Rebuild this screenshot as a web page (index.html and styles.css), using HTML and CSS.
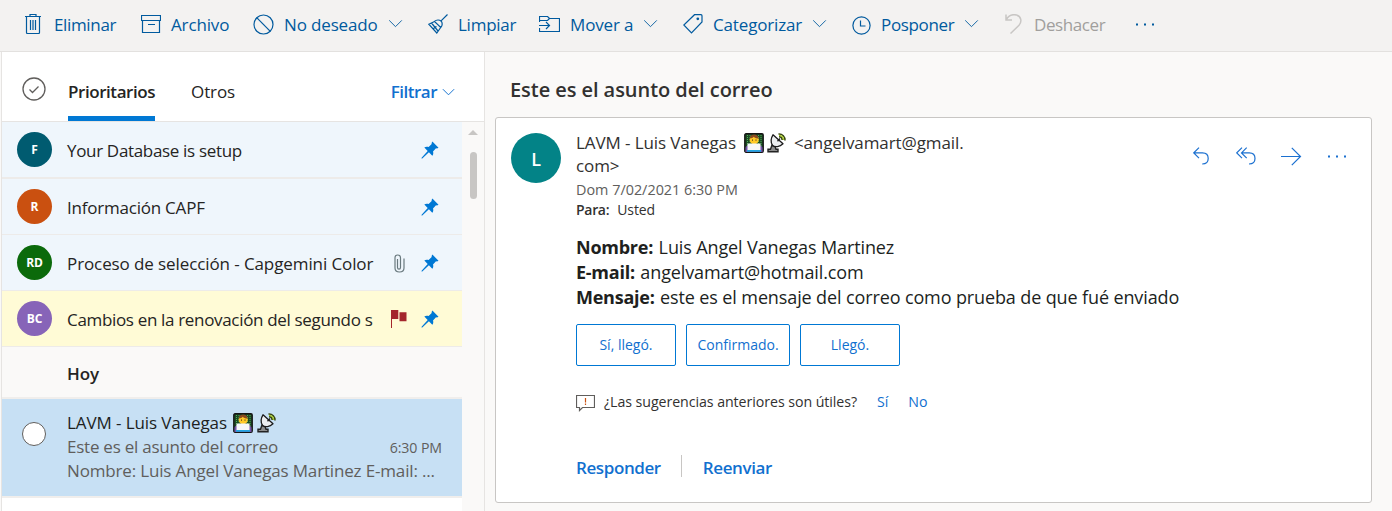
FILE: index.html
```html
<!DOCTYPE html>
<html lang="es">
<head>
<meta charset="utf-8">
<title>Correo</title>
<link rel="stylesheet" href="styles.css">
</head>
<body>
<svg class="defs" width="0" height="0" aria-hidden="true">
  <symbol id="chevron" viewBox="0 0 16 10"><path d="M1 1.5l7 7 7-7"/></symbol>
  <symbol id="pin" viewBox="0 0 18 18"><path class="solid" d="M11.4 .6l6.1 6.1-1.5.7-1-.1-3 3.1c.6 1.7.3 3.200-.7 4.300L7.900 11.300 1.300 17.500.5 17.600l.1-.9L6.700 10 3.300 6.600c1.200-1 2.700-1.200 4.300-.6l3.100-3-.1-1z"/></symbol>
  <symbol id="coder" viewBox="0 0 20 20">
    <rect x=".8" y=".8" width="18.400" height="18.400" rx="1.200" fill="#1d4a24" stroke="#151515" stroke-width="1.400"/>
    <path d="M3.500 2v15M6 2v15M14.500 2v15M17 2v15" stroke="#4fae57" stroke-width="1" stroke-dasharray="1 1"/>
    <path d="M1.500 19v-4c0-2 2-2.500 4-2.500h9c2 0 4 .5 4 2.500v4z" fill="#7451a8"/>
    <circle cx="10.200" cy="6.800" r="4.600" fill="#ffc928"/>
    <path d="M5.800 5.500c0-5 8.300-5.500 8.900 0-2.500 0-4-.8-5-1.800-.8 1-2 1.700-3.900 1.800z" fill="#8c4b20"/>
    <path d="M8.500 6.500v1.200M12 6.500v1.200" stroke="#4b3220" stroke-width="1"/>
    <path d="M3.500 10.500h13v6.500h-13z" fill="#f7f7fa"/><path d="M3 17h14v1.800H3z" fill="#22a4df"/>
  </symbol>
  <symbol id="dish" viewBox="0 0 20 20">
    <path d="M1 18.800V16.200h2.500l1.500-4.200 3 1.500 1 2.700h2v2.600z" fill="#8d8d8d" stroke="#222" stroke-width="1.400"/>
    <path d="M6 1.800L16 10.800C13 13.500 8 15 5.500 12.200 3.500 9.200 4 5 6 1.800z" fill="#eceef0" stroke="#1c1c1c" stroke-width="1.300" stroke-linejoin="round"/>
    <path d="M10.500 8.200l2.500-2.700" stroke="#1c1c1c" stroke-width="1.300"/>
    <path d="M12 3.800c2 0 3.200 1.200 3.200 3.200M11.500 1c4-.2 6.700 2.500 6.500 6.500" fill="none" stroke="#36450f" stroke-width="1.500"/>
    <path d="M12 2.400c2.900.2 4.500 1.800 4.600 4.600" fill="none" stroke="#a3c71d" stroke-width="1.100"/>
  </symbol>
</svg>

<header class="toolbar">
  <div class="tool tool-delete">
    <svg class="icon" width="16" height="20" viewBox="0 0 16 20"><path d="M0 2.500h16M5 2.500v-2h6v2M1.500 2.500v16q0 1 1 1h11q1 0 1-1v-16M5.500 6v10M8 6v10M10.500 6v10"/></svg>
    <span>Eliminar</span>
  </div>
  <div class="tool tool-archive">
    <svg class="icon" width="20" height="18" viewBox="0 0 20 18"><path d="M.5.500h19v5H.5zM1.500 5.500v12h17v-12M7 9.500h7"/></svg>
    <span>Archivo</span>
  </div>
  <div class="tool tool-junk">
    <svg class="icon" width="21" height="21" viewBox="0 0 21 21"><circle cx="10.500" cy="10.500" r="9.500"/><path d="M3.700 3.700l13.600 13.600"/></svg>
    <span>No deseado</span><svg class="icon chev" width="15" height="9"><use href="#chevron"/></svg>
  </div>
  <div class="tool tool-sweep">
    <svg class="icon" width="20" height="20" viewBox="0 0 20 20"><path d="M19.500.500l-6.200 6.200M6.500 7.500c2-2 5-1.800 6.500-.5s1.800 4.500-.3 6.500zM6.500 7.500L.8 10.200 8.800 19l3.900-5.500M3.500 9l6.500 8M5.500 14.500l3-2"/></svg>
    <span>Limpiar</span>
  </div>
  <div class="tool tool-move">
    <svg class="icon" width="21" height="16" viewBox="0 0 21 16"><path d="M.5 6V.5h8l2 2h10v13H.5V12M.5 4.500h8l2-2M0 9.500h10M7 6l3.500 3.500L7 13"/></svg>
    <span>Mover a</span><svg class="icon chev" width="15" height="9"><use href="#chevron"/></svg>
  </div>
  <div class="tool tool-tag">
    <svg class="icon" width="20" height="20" viewBox="0 0 20 20"><path d="M11.500.700h6.500q1 0 1 1V8L8.500 18.800.8 11z"/><circle class="dot" cx="14.800" cy="4.800" r="1.400"/></svg>
    <span>Categorizar</span><svg class="icon chev" width="15" height="9"><use href="#chevron"/></svg>
  </div>
  <div class="tool tool-snooze">
    <svg class="icon" width="19" height="19" viewBox="0 0 19 19"><circle cx="9.500" cy="9.500" r="8.600"/><path d="M8.500 4.500v5.500h5"/></svg>
    <span>Posponer</span><svg class="icon chev" width="15" height="9"><use href="#chevron"/></svg>
  </div>
  <div class="tool tool-undo">
    <svg class="icon" width="17" height="20" viewBox="0 0 17 20"><path d="M1 .500v5.500h6M1.300 5.500C4 1 8 .2 11.500 1c5 1.500 5.500 7 2.500 10.300L5.500 19.500"/></svg>
    <span>Deshacer</span>
  </div>
  <div class="tool tool-more">
    <svg class="icon" width="19" height="3" viewBox="0 0 19 3"><path class="solid" d="M0 .500h2v2H0zM8 .500h2v2H8zM16 .500h2v2h-2z"/></svg>
  </div>
</header>

<main class="workspace">
  <section class="list">
    <nav class="tabs">
      <svg class="select-all" width="24" height="24" viewBox="0 0 24 24"><circle cx="12" cy="12" r="11"/><path d="M7.500 12.500l3 3 6-6"/></svg>
      <span class="tab tab-active">Prioritarios</span>
      <span class="tab">Otros</span>
      <span class="filter">Filtrar <svg class="icon" width="13" height="8"><use href="#chevron"/></svg></span>
    </nav>
    <div class="list-body">
      <div class="messages">
        <article class="row row-first"><span class="avatar teal">F</span><span class="title tight">Your Database is setup</span><svg class="pin" width="18" height="18"><use href="#pin"/></svg></article>
        <article class="row"><span class="avatar orange">R</span><span class="title">Información CAPF</span><svg class="pin" width="18" height="18"><use href="#pin"/></svg></article>
        <article class="row"><span class="avatar green">RD</span><span class="title loose">Proceso de selección - Capgemini Color</span>
          <svg class="clip" width="11" height="19" viewBox="0 0 11 19"><path d="M3.500 5v8.500q0 1.700 1.500 1.700t1.500-1.700V4q0-3-2.800-3T1 4v10q0 4 4.500 4t4.500-4V4.500"/></svg>
          <svg class="pin" width="18" height="18"><use href="#pin"/></svg></article>
        <article class="row row-flagged"><span class="avatar purple">BC</span><span class="title tight">Cambios en la renovación del segundo s</span>
          <svg class="flag" width="16" height="18" viewBox="0 0 16 18"><path class="pole" d="M.5 0v18"/><path d="M1 0h6.300v9H1zM8.500 2.200H15.500v9H8.500z"/></svg>
          <svg class="pin" width="18" height="18"><use href="#pin"/></svg></article>
        <h2 class="group">Hoy</h2>
        <article class="selected">
          <span class="check"></span>
          <div class="summary">
            <div class="sender">LAVM - Luis Vanegas <svg class="emoji" width="20" height="20" role="img" aria-label="👨‍💻"><use href="#coder"/></svg><svg class="emoji" width="20" height="20" role="img" aria-label="📡"><use href="#dish"/></svg></div>
            <div class="line"><span class="tight-sub">Este es el asunto del correo</span><time>6:30 PM</time></div>
            <div class="line preview">Nombre: Luis Angel Vanegas Martinez E-mail: ...</div>
          </div>
        </article>
      </div>
      <div class="scrollbar"><span class="scroll-up"></span><span class="thumb"></span></div>
    </div>
  </section>

  <section class="reader">
    <h1>Este es el asunto del correo</h1>
    <article class="card">
      <span class="avatar avatar-large">L</span>
      <div class="content">
        <div class="from"><span class="from-name">LAVM - Luis Vanegas</span><svg class="emoji" width="20" height="20" role="img" aria-label="👨‍💻"><use href="#coder"/></svg><svg class="emoji" width="20" height="20" role="img" aria-label="📡"><use href="#dish"/></svg><span class="address">&lt;angelvamart@gmail.</span><br>com&gt;</div>
        <div class="date">Dom 7/02/2021 6:30 PM</div>
        <div class="to"><b>Para:</b><span>Usted</span></div>
        <div class="body">
          <div><b>Nombre:</b> Luis Angel Vanegas Martinez</div>
          <div><b>E-mail:</b> angelvamart@hotmail.com</div>
          <div><b>Mensaje:</b> este es el mensaje del correo como prueba de que fué enviado</div>
        </div>
        <div class="replies"><button>Sí, llegó.</button><button class="wide">Confirmado.</button><button>Llegó.</button></div>
        <div class="feedback">
          <svg width="19" height="18" viewBox="0 0 19 18"><path d="M.5 1.500h18v12H6.500L3.500 16.500v-3h-3z"/><path class="bang" d="M9.500 4v4.500M9.500 9.500V11"/></svg>
          <span class="question">¿Las sugerencias anteriores son útiles?</span><a class="yes">Sí</a><a>No</a>
        </div>
        <div class="respond"><a>Responder</a><a>Reenviar</a></div>
      </div>
      <div class="actions">
        <svg class="icon" width="16" height="18" viewBox="0 0 16 18"><path d="M6 .700L.8 5.900 6 11.100M1 5.900h8.500c3.800 0 5.700 2.600 5.700 5.600s-2 5.500-6 5.500"/></svg>
        <svg class="icon reply-all" width="20" height="18" viewBox="0 0 20 18"><path d="M6 .700L.8 5.900 6 11.100M10.700.700L5.500 5.900l5.200 5.200M5.700 5.900h7.600c3.800 0 5.700 2.600 5.700 5.600s-2 5.500-6 5.500"/></svg>
        <svg class="icon forward" width="21" height="19" viewBox="0 0 21 19"><path d="M0 9.500h19.500M10.800.800l8.700 8.700-8.700 8.700"/></svg>
        <svg class="icon" width="18" height="3" viewBox="0 0 18 3"><path class="solid" d="M0 .500h2v2H0zM8 .500h2v2H8zM16 .500h2v2h-2z"/></svg>
      </div>
    </article>
  </section>
</main>
</body>
</html>
```
FILE: styles.css
```css
* { box-sizing: border-box; }
body {
  margin: 0;
  width: 1392px;
  height: 511px;
  overflow: hidden;
  display: flex;
  flex-direction: column;
  background: #faf9f8;
  color: #252423;
  font: 400 17px/24px "Open Sans", "Noto Sans", sans-serif;
  letter-spacing: -.1px;
}
svg { display: block; flex: none; }
.defs { position: absolute; }
h1, h2 { margin: 0; }
.icon { fill: none; stroke: currentColor; stroke-width: 1.2; }
.solid, .dot { fill: currentColor; stroke: none; }

.toolbar {
  flex: none;
  height: 52px;
  padding: 0 0 2px 24px;
  display: grid;
  grid-template-columns: 117px 112px 174px 112px 144px 169px 152px 132px auto;
  align-items: center;
  background: #f3f2f1;
  border-bottom: 1px solid #e3e1df;
  color: #005a9e;
}
.tool { display: flex; align-items: center; letter-spacing: -.15px; white-space: nowrap; }
.tool > .icon:first-child { margin-top: -1px; }
.chev { margin-bottom: 3px; stroke-width: 1; }
.tool-delete { padding-left: 1px; gap: 13px; letter-spacing: -.35px; }
.tool-archive { gap: 10px; }
.tool-junk { gap: 10px; }
.tool-sweep { padding-left: 1px; gap: 10px; letter-spacing: -.25px; }
.tool-move { gap: 10px; }
.tool-tag { gap: 10px; }
.tool-snooze { gap: 10px; letter-spacing: -.35px; }
.tool-snooze > .icon:first-child { margin-top: 1px; }
.tool-undo { padding-left: 1px; gap: 12px; letter-spacing: -.4px; color: #a19f9d; }
.tool-undo .icon { color: #c8c6c4; stroke-width: 1.5; }

.workspace { flex: 1; display: flex; min-height: 0; }
.list {
  margin-left: 1px;
  flex: 0 0 484px;
  border-left: 1px solid #e6e4e2;
  border-right: 1px solid #e6e4e2;
  display: flex;
  flex-direction: column;
}
.tabs {
  height: 70px;
  flex: none;
  display: flex;
  align-items: center;
  padding: 9px 29px 0 20px;
  background: #fff;
  border-bottom: 1px solid #e6e4e2;
}
.select-all { margin: -4px 22px 0 0; fill: none; stroke: #605e5c; stroke-width: 1.3; }
.tab { margin-left: 36px; padding-top: 1px; }
.tab-active {
  margin-left: 0;
  height: 60px;
  padding-top: 19px;
  border-bottom: 5px solid #0078d4;
  font-weight: 600;
  letter-spacing: -.44px;
}
.filter { margin-left: auto; padding-top: 1px; display: flex; align-items: center; gap: 5px; color: #1170cf; font-weight: 600; letter-spacing: -.5px; }

.list-body { flex: 1; display: flex; min-height: 0; }
.messages { width: 460px; background: #fff; }
.row {
  height: 56px;
  display: flex;
  align-items: center;
  padding: 0 23px 0 15px;
  background: #eff6fc;
  border-bottom: 1px solid #edebe9;
}
.row-first { height: 57px; border-bottom-width: 2px; }
.row-flagged { background: #fffbd6; }
.avatar {
  flex: none;
  width: 35px;
  height: 35px;
  border-radius: 50%;
  color: #fff;
  text-align: center;
  font-size: 12px;
  font-weight: 700;
  line-height: 35px;
}
.teal { background: #005b70; }
.orange { background: #ca5010; }
.green { background: #0b6a0b; }
.purple { background: #8764b8; }
.title {
  flex: 1;
  min-width: 0;
  margin: 2px 0 0 15px;
  white-space: nowrap;
  letter-spacing: -.22px;
}
.tight { letter-spacing: -.33px; }
.loose { letter-spacing: -.1px; }
.pin { margin-top: 1px; color: #0078d4; }
.clip { margin: 2px 16px 0 0; fill: none; stroke: #69797e; stroke-width: 1.2; }
.flag { margin: 1px 14px 0 0; fill: #a4262c; }
.pole { stroke: #a4262c; stroke-width: 1; }
.group {
  height: 52px;
  padding: 15px 0 0 65px;
  background: #faf9f8;
  border-bottom: 2px solid #f0eeec;
  font-size: 17px;
  font-weight: 600;
  line-height: 24px;
}
.selected {
  height: 99px;
  display: flex;
  padding: 12px 20px 0 20px;
  background: #c7e0f4;
  border-bottom: 2px solid #f0eeec;
}
.check { flex: none; width: 24px; height: 24px; margin-top: 11px; border: 1.5px solid #605e5c; border-radius: 50%; background: #fff; }
.summary { flex: 1; min-width: 0; margin-left: 21px; white-space: nowrap; }
.sender { display: flex; align-items: center; color: #201f1e; }
.sender .emoji { margin-left: 4px; }
.sender .emoji:first-of-type { margin-left: 6px; }
.line { display: flex; height: 24px; justify-content: space-between; color: #605e5c; }
.tight-sub { letter-spacing: -.24px; }
.preview { letter-spacing: -.16px; }
.line time { font-size: 14.200px; line-height: 25px; }
.scrollbar { flex: 1; display: flex; flex-direction: column; align-items: center; padding-top: 8px; background: #faf9f8; }
.scroll-up { border: 5px solid transparent; border-top: 0; border-bottom: 5px solid #c8c6c4; }
.thumb { width: 7px; height: 47px; margin: 17px 0 0 1px; border-radius: 4px; background: #c8c6c4; }

.reader { flex: 1; padding: 24px 20px 0 10px; }
.reader h1 { height: 41px; padding-left: 15px; font-size: 20px; line-height: 27px; font-weight: 600; letter-spacing: -.06px; color: #323130; }
.card {
  height: 386px;
  display: flex;
  padding: 15px 25px 0 15px;
  background: #fff;
  border: 1px solid #c8c6c4;
  border-radius: 3px;
}
.avatar-large { width: 50px; height: 50px; background: #038387; font-size: 18px; font-weight: 600; line-height: 52px; }
.content { flex: 1; margin-left: 15px; white-space: nowrap; }
.from { margin-top: -2px; line-height: 23px; color: #323130; }
.from .emoji { display: inline-block; vertical-align: middle; margin: -3px 0 0 3px; }
.from .emoji:first-of-type { margin-left: 8px; }
.address { margin-left: 7px; }
.date { height: 23px; font-size: 14.400px; line-height: 25px; letter-spacing: 0; color: #605e5c; }
.to { height: 19px; display: flex; gap: 8px; font-size: 14px; line-height: 19px; color: #323130; }
.to b { font-weight: 600; letter-spacing: -.3px; }
.body { margin-top: 16px; font-size: 18px; line-height: 25px; color: #201f1e; letter-spacing: -.12px; }
.body b { margin-right: 1px; font-weight: 700; letter-spacing: -.25px; }
.replies { display: flex; gap: 10px; margin-top: 14px; }
.replies button {
  width: 100px;
  height: 42px;
  padding: 0;
  border: 1px solid #0078d4;
  border-radius: 2px;
  background: #fff;
  color: #1170cf;
  font: inherit;
  font-size: 14px;
}
.replies .wide { width: 104px; }
.feedback { display: flex; align-items: center; margin-top: 24px; font-size: 14.200px; letter-spacing: -.06px; color: #323130; }
.feedback svg { margin: 2px 9px 0 0; fill: none; stroke: #605e5c; stroke-width: 1.2; }
.feedback .bang { stroke: #ca5010; }
.feedback a { color: #1170cf; }
.feedback .yes { margin: 0 20px; }
.respond { display: flex; align-items: center; margin-top: 41px; color: #1170cf; font-weight: 600; letter-spacing: -.4px; }
.respond a + a { margin-left: 20px; padding-left: 21px; border-left: 1px solid #c8c6c4; }
.respond a { height: 22px; line-height: 25px; }
.actions { display: flex; height: 20px; margin-top: 13px; gap: 26px; align-items: center; color: #1b70d0; }
.actions .reply-all { margin-left: 1px; }
.actions .forward { margin-left: -1px; }
```
